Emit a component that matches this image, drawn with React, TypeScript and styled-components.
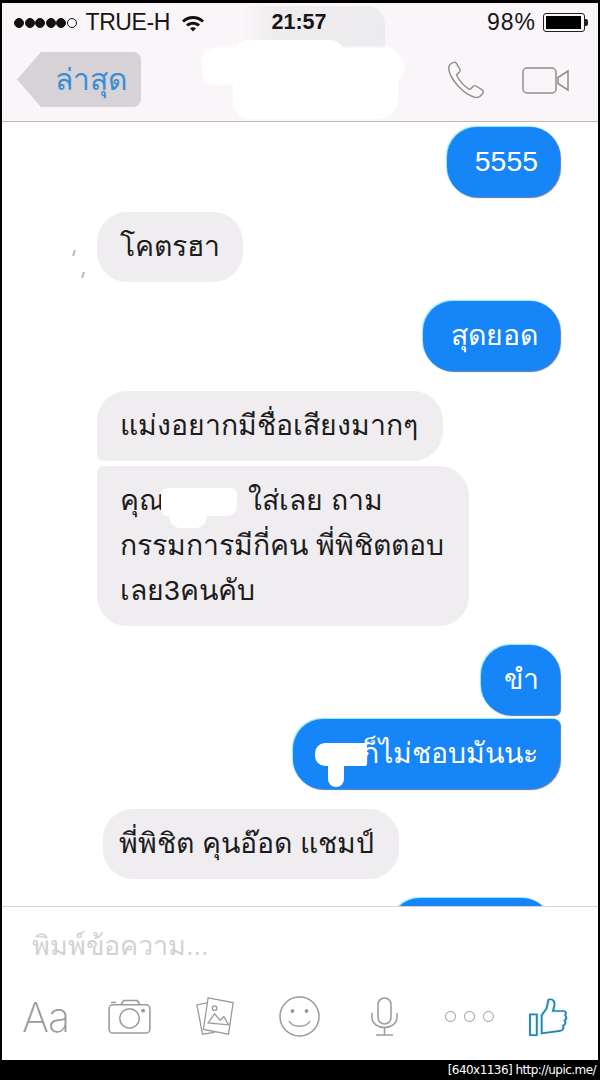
import React from 'react';
import styled, { createGlobalStyle } from 'styled-components';

const GlobalStyle = createGlobalStyle`
  html, body {
    margin: 0;
    padding: 0;
    background: #000;
    font-family: "Liberation Sans", "Noto Sans", "DejaVu Sans", sans-serif;
  }
  * {
    box-sizing: border-box;
  }
`;

const App = () => {
  return (
    <>
      <GlobalStyle />
      <Page>
        <Screen>
          <Header>
            <HeaderBackdrop />
            <StatusBar>
              <Carrier>
                <Signal>
                  <Dot />
                  <Dot />
                  <Dot />
                  <Dot />
                  <Dot />
                  <Dot $empty />
                </Signal>
                <CarrierName>TRUE-H</CarrierName>
                <svg width="24" height="18" viewBox="0 0 24 18">
                  <path d="M1 6.5C7 .6 17 .6 23 6.5L21 8.6C16 3.8 8 3.8 3 8.6Z" fill="#111" />
                  <path d="M5 10.5C9 6.8 15 6.8 19 10.5L17 12.6C14 10 10 10 7 12.6Z" fill="#111" />
                  <path d="M9 14.2C10.8 12.9 13.2 12.9 15 14.2L12 17.5Z" fill="#111" />
                </svg>
              </Carrier>
              <Clock>21:57</Clock>
              <Battery>
                <span>98%</span>
                <BatteryShell>
                  <BatteryFill />
                </BatteryShell>
                <BatteryNub />
              </Battery>
            </StatusBar>
            <NavBar>
              <BackButton>
                <BackLabel>ล่าสุด</BackLabel>
              </BackButton>
              <NavIcons>
                <svg width="42" height="40" viewBox="0 0 42 42" fill="none" stroke="#8f8f8f" strokeWidth="1.5">
                  <path d="M8 2.5C5.5 3 3 5.5 2.8 8C3 14 7 21 12.5 27C18 33 25 38 31.5 39.5C35 39.5 38 36.5 39 34C39.5 32.8 39 32 38 31.3L31.5 27.3C30.3 26.6 29.3 26.8 28.4 27.8L26 30.3C25.4 30.9 24.8 31 24 30.5C19.5 27.5 14 21.5 11.5 16.8C11 16 11.2 15.3 11.8 14.8L14.2 12.6C15 11.8 15.2 10.9 14.6 9.8L11 3.5C10.3 2.6 9.3 2.2 8 2.5Z" />
                </svg>
                <svg width="47" height="27" viewBox="0 0 47 27" fill="none" stroke="#8f8f8f" strokeWidth="1.5">
                  <rect x="1" y="1" width="33" height="25" rx="4" />
                  <path d="M36 10.5L46 4V23L36 16.5Z" />
                </svg>
              </NavIcons>
            </NavBar>
            <NameSmudge />
          </Header>

          <Conversation>
            <Message $side="right" $top={5}>
              <Bubble $side="right" $width={113}>5555</Bubble>
            </Message>
            <Message $side="left" $top={15}>
              <AvatarMark $left={-24} $at={38} />
              <AvatarMark $left={-15} $at={60} />
              <Bubble $side="left" $width={146}>โคตรฮา</Bubble>
            </Message>
            <Message $side="right" $top={19}>
              <Bubble $side="right" $width={137}>สุดยอด</Bubble>
            </Message>
            <Message $side="left" $top={20}>
              <Bubble $side="left" $width={346} $tail="bottom">แม่งอยากมีชื่อเสียงมากๆ</Bubble>
            </Message>
            <Message $side="left" $top={5}>
              <Bubble $side="left" $width={372} $tail="top">
                คุณ<NameGap />ใส่เลย ถาม
                <br />
                กรรมการมีกี่คน พี่พิชิตตอบ
                <br />
                เลย3คนคับ
                <HiddenName />
              </Bubble>
            </Message>
            <Message $side="right" $top={19}>
              <Bubble $side="right" $width={79} $tail="bottom">ขำ</Bubble>
            </Message>
            <Message $side="right" $top={4}>
              <Bubble $side="right" $width={267} $tail="top">
                ก็ไม่ชอบมันนะ
                <BubbleSmudge />
              </Bubble>
            </Message>
            <Message $side="left" $top={20} $indent={6}>
              <Bubble $side="left" $width={296} $lead={16}>พี่พิชิต คุนอ๊อด แชมป์</Bubble>
            </Message>
            <Message $side="right" $top={19} $inset={8}>
              <Bubble $side="right" $width={162}>&nbsp;</Bubble>
            </Message>
          </Conversation>

          <Composer>
            <Placeholder>พิมพ์ข้อความ...</Placeholder>
            <Toolbar>
              <TextTool>Aa</TextTool>
              <svg width="43" height="35" viewBox="0 0 44 36" fill="none" stroke="#9a9a9a" strokeWidth="1.6">
                <rect x="1" y="6" width="42" height="29" rx="4" />
                <path d="M13 6L16 1.5H30L33 6" />
                <path d="M3 3.5H8" />
                <circle cx="22" cy="20" r="10" />
                <circle cx="36" cy="12" r="1.2" fill="#9a9a9a" />
              </svg>
              <svg width="41" height="39" viewBox="0 0 42 42" fill="none" stroke="#9a9a9a" strokeWidth="1.4">
                <path d="M13 6L1 8.5L7 40L20 38" />
                <path d="M13 1L40 6L35 40L8 35Z" fill="#fff" />
                <circle cx="20" cy="12" r="2.4" />
                <path d="M13 28L20 18L26 25L30 21L35 30Z" />
              </svg>
              <svg width="41" height="41" viewBox="0 0 41 41" fill="none" stroke="#9a9a9a" strokeWidth="1.5">
                <circle cx="20.5" cy="20.5" r="19.5" />
                <circle cx="13.5" cy="15" r="1.2" fill="#9a9a9a" />
                <circle cx="27.5" cy="15" r="1.2" fill="#9a9a9a" />
                <path d="M10 25C14 32 27 32 31 25" />
              </svg>
              <svg width="27" height="39" viewBox="0 0 27 39" fill="none" stroke="#9a9a9a" strokeWidth="1.5">
                <rect x="7" y="1" width="13" height="26" rx="6.5" />
                <path d="M1 16V20C1 34 26 34 26 20V16" />
                <path d="M13.5 31V38M5 38H22" />
              </svg>
              <Dots>
                <MoreDot />
                <MoreDot />
                <MoreDot />
              </Dots>
              <ThumbIcon
                width="39"
                height="38"
                viewBox="0 0 40 44"
                preserveAspectRatio="none"
                fill="none"
                stroke="#2d7fa8"
                strokeWidth="1.9"
              >
                <rect x="1" y="19" width="7" height="24" />
                <path d="M13 41V20L18 12C19 9 19 5 20 2C24 0 27 4 26 9L24.5 15H35C38 15 38.5 18 37 20C39 22 38.5 25 36.5 26C38 28 37.5 31 35 32C36 35 34.5 38 32 38L13 41Z" />
              </ThumbIcon>
            </Toolbar>
          </Composer>
        </Screen>
        <Watermark>[640x1136] http://upic.me/</Watermark>
      </Page>
    </>
  );
};

const Page = styled.div`
  width: 600px;
  height: 1080px;
  padding: 3px 2px 0;
  background: #000;
  overflow: hidden;
`;

const Screen = styled.div`
  width: 596px;
  height: 1057px;
  display: flex;
  flex-direction: column;
  background: #fff;
`;

const Header = styled.div`
  position: relative;
  height: 119px;
  flex: none;
  background: #f9f5f8;
  border-bottom: 1px solid #b9b9b9;
  overflow: hidden;
`;

const HeaderBackdrop = styled.div`
  position: absolute;
  left: 240px;
  top: 3px;
  width: 143px;
  height: 60px;
  background: linear-gradient(90deg, #f9f5f8 0%, #efecef 25%, #ecebed 100%);
  border-radius: 0 18px 0 0;
`;

const NameSmudge = styled.div`
  position: absolute;
  left: 201px;
  top: 45px;
  width: 200px;
  height: 36px;
  background: #fff;
  border-radius: 14px 20px 16px 12px;
  box-shadow: 0 0 3px 1px #fff;

  &::before {
    content: '';
    position: absolute;
    left: 32px;
    top: -8px;
    width: 108px;
    height: 20px;
    background: #fff;
    border-radius: 12px 12px 0 0;
  }

  &::after {
    content: '';
    position: absolute;
    left: 30px;
    top: 30px;
    width: 165px;
    height: 41px;
    background: #fff;
    border-radius: 0 0 20px 16px;
  }
`;

const StatusBar = styled.div`
  position: relative;
  height: 38px;
  padding: 1px 10px 0 12px;
  display: flex;
  align-items: center;
  justify-content: space-between;
  font-size: 23px;
  color: #161616;
`;

const Carrier = styled.div`
  width: 230px;
  display: flex;
  align-items: center;
  gap: 11px;
`;

const Signal = styled.div`
  display: flex;
  gap: 0.5px;
  margin-right: -2px;
`;

const Dot = styled.span<{ $empty?: boolean }>`
  width: 10px;
  height: 10px;
  border-radius: 50%;
  border: 1px solid #111;
  background: ${({ $empty }) => ($empty ? 'transparent' : '#111')};
`;

const CarrierName = styled.span`
  letter-spacing: -0.4px;
`;

const Clock = styled.div`
  font-weight: 700;
  font-size: 21.5px;
  margin-right: 4px;
`;

const Battery = styled.div`
  width: 230px;
  display: flex;
  align-items: center;
  justify-content: flex-end;
  letter-spacing: 1px;
`;

const BatteryShell = styled.div`
  width: 42px;
  height: 19px;
  margin-left: 7px;
  padding: 2px;
  border: 1px solid #222;
  border-radius: 3px;
`;

const BatteryFill = styled.div`
  width: 96%;
  height: 100%;
  background: #000;
`;

const BatteryNub = styled.div`
  width: 3px;
  height: 7px;
  background: #222;
  border-radius: 0 2px 2px 0;
`;

const NavBar = styled.div`
  position: relative;
  height: 80px;
  padding: 11px 29px 0 15px;
  display: flex;
  align-items: flex-start;
  justify-content: space-between;
`;

const BackButton = styled.div`
  width: 124px;
  height: 55px;
  padding-left: 38px;
  display: flex;
  align-items: center;
  background: #d7d2d6;
  clip-path: polygon(24px 0, 100% 0, 100% 100%, 24px 100%, 0 50%);
  border-radius: 0 8px 8px 0;
`;

const BackLabel = styled.span`
  font-size: 30px;
  color: #3a8fd2;
`;

const NavIcons = styled.div`
  display: flex;
  align-items: center;
  gap: 35px;
  margin-top: 8px;
`;

const Conversation = styled.div`
  flex: 1;
  min-height: 0;
  display: flex;
  flex-direction: column;
  padding: 0 38px 0 95px;
  overflow: hidden;
`;

const Message = styled.div<{
  $side: 'left' | 'right';
  $top: number;
  $indent?: number;
  $inset?: number;
}>`
  position: relative;
  flex: none;
  display: flex;
  justify-content: ${({ $side }) => ($side === 'right' ? 'flex-end' : 'flex-start')};
  margin-top: ${({ $top }) => $top}px;
  padding-left: ${({ $indent }) => $indent ?? 0}px;
  padding-right: ${({ $inset }) => $inset ?? 0}px;
`;

const AvatarMark = styled.span<{ $left: number; $at: number }>`
  position: absolute;
  left: ${({ $left }) => $left}px;
  top: ${({ $at }) => $at}px;
  width: 2px;
  height: 6px;
  background: #b9b9b9;
  transform: rotate(20deg);
`;

const tailRadius = (side: string, tail?: string) => {
  const big = '30px';
  const small = '6px';
  if (side === 'right') {
    if (tail === 'bottom') return `${big} ${big} ${small} ${big}`;
    if (tail === 'top') return `${big} ${small} ${big} ${big}`;
  } else {
    if (tail === 'bottom') return `${big} ${big} ${big} ${small}`;
    if (tail === 'top') return `${small} ${big} ${big} ${big}`;
  }
  return big;
};

const Bubble = styled.div<{
  $side: 'left' | 'right';
  $width: number;
  $tail?: string;
  $lead?: number;
}>`
  position: relative;
  width: ${({ $width }) => $width}px;
  min-height: 70px;
  padding: 12px 22px 13px ${({ $lead }) => $lead ?? 23}px;
  font-size: 28.4px;
  line-height: 45px;
  white-space: nowrap;
  text-align: ${({ $side }) => ($side === 'right' ? 'right' : 'left')};
  color: ${({ $side }) => ($side === 'right' ? '#fff' : '#1c1c1c')};
  background: ${({ $side }) => ($side === 'right' ? '#1685f8' : '#f0edf1')};
  border-radius: ${({ $side, $tail }) => tailRadius($side, $tail)};
  box-shadow: ${({ $side }) =>
    $side === 'right' ? '-1px -1px 1px #8fe6ff, 1px 1px 1px #5a7aa6' : 'none'};
`;

const NameGap = styled.span`
  display: inline-block;
  width: 83px;
`;

const HiddenName = styled.span`
  position: absolute;
  left: 64px;
  top: 22px;
  width: 76px;
  height: 28px;
  background: #fff;
  border-radius: 8px 6px 10px 6px;

  &::after {
    content: '';
    position: absolute;
    left: 8px;
    top: 22px;
    width: 38px;
    height: 18px;
    background: #fff;
    border-radius: 0 0 12px 12px;
  }
`;

const BubbleSmudge = styled.span`
  position: absolute;
  left: 22px;
  top: 24px;
  width: 52px;
  height: 23px;
  background: #fff;
  border-radius: 10px 2px 2px 10px;

  &::after {
    content: '';
    position: absolute;
    left: 13px;
    top: 18px;
    width: 16px;
    height: 26px;
    background: #fff;
    border-radius: 0 0 8px 8px;
  }
`;

const Composer = styled.div`
  position: relative;
  height: 154px;
  flex: none;
  padding: 17px 30px 0 20px;
  background: #fff;
  border-top: 1px solid #d4d4d4;
`;

const Placeholder = styled.div`
  padding-left: 10px;
  font-size: 27px;
  line-height: 44px;
  color: #d2d2d2;
`;

const Toolbar = styled.div`
  margin-top: 28px;
  display: grid;
  grid-template-columns: 86px 87px 84px 92px 74px 84px 39px;
  align-items: center;
`;

const TextTool = styled.span`
  font-family: Inter, "Liberation Sans", sans-serif;
  font-size: 41px;
  font-weight: 200;
  line-height: 38px;
  color: #9a9a9a;
  letter-spacing: -1px;
`;

const Dots = styled.div`
  display: flex;
  gap: 8px;
`;

const MoreDot = styled.span`
  width: 11px;
  height: 11px;
  border: 1.5px solid #9a9a9a;
  border-radius: 50%;
`;

const ThumbIcon = styled.svg`
  filter: drop-shadow(0 0 1px #a8ecff);
`;

const Watermark = styled.div`
  height: 20px;
  padding-right: 2px;
  text-align: right;
  font-family: "DejaVu Sans", sans-serif;
  font-size: 12px;
  line-height: 20px;
  letter-spacing: -0.55px;
  color: #fff;
`;

export default App;
